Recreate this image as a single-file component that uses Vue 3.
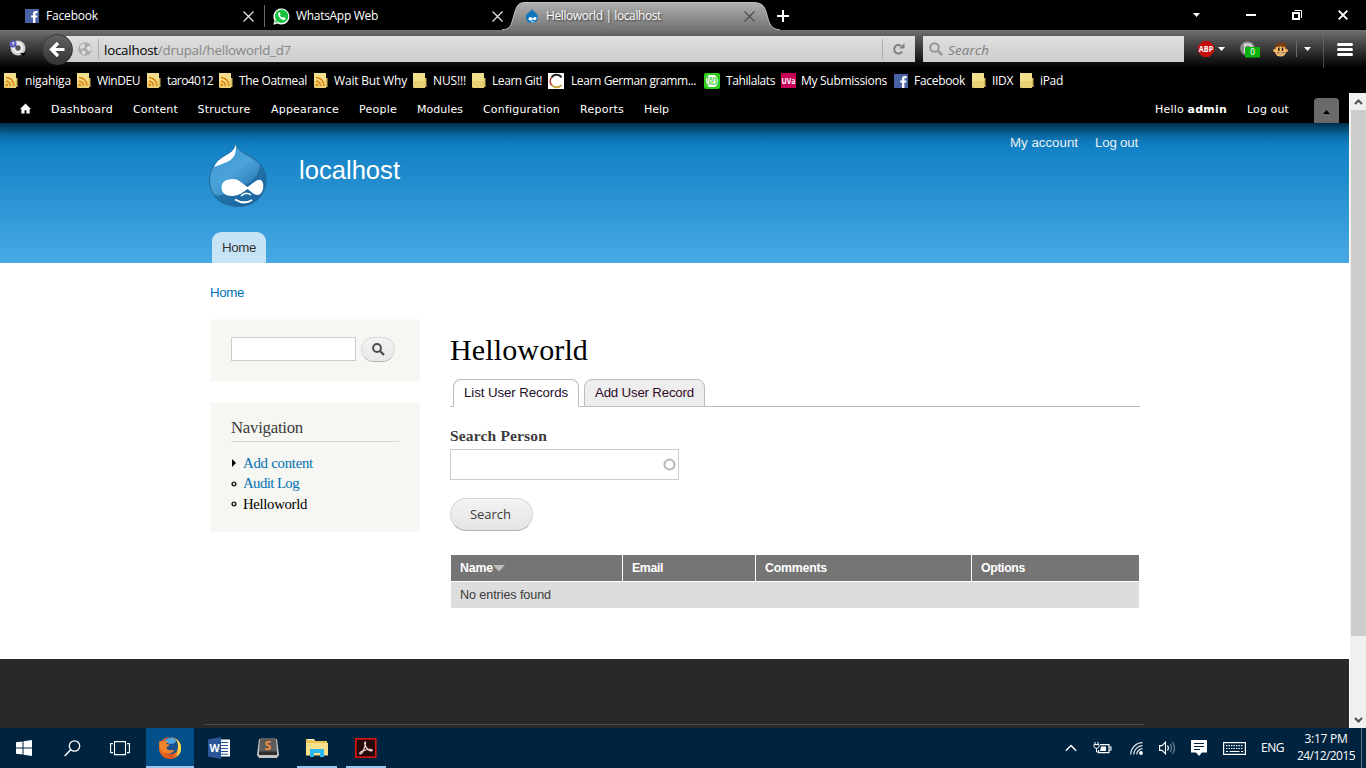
<script setup>
// Spreads letters so a label takes exactly the given width in pixels.
const vFit = {
  mounted(el, { value }) {
    const range = document.createRange()
    range.selectNodeContents(el)
    const natural = range.getBoundingClientRect().width
    const n = el.textContent.length
    if (n > 1) el.style.letterSpacing = (value - natural) / n + 'px'
  },
}

const bookmarks = [
  { icon: 'feed', label: 'nigahiga', w: 46 },
  { icon: 'feed', label: 'WinDEU', w: 43 },
  { icon: 'feed', label: 'taro4012', w: 46 },
  { icon: 'feed', label: 'The Oatmeal', w: 68 },
  { icon: 'feed', label: 'Wait But Why', w: 73 },
  { icon: 'folder', label: 'NUS!!!', w: 33 },
  { icon: 'folder', label: 'Learn Git!', w: 50 },
  { icon: 'german', label: 'Learn German gramm...', w: 125 },
  { icon: 'tahi', label: 'Tahilalats', w: 49 },
  { icon: 'uva', label: 'My Submissions', w: 86 },
  { icon: 'fb', label: 'Facebook', w: 51 },
  { icon: 'folder', label: 'IIDX', w: 21 },
  { icon: 'folder', label: 'iPad', w: 23 },
]

const adminLinks = [
  { label: 'Dashboard', w: 62 },
  { label: 'Content', w: 45 },
  { label: 'Structure', w: 53 },
  { label: 'Appearance', w: 68 },
  { label: 'People', w: 38 },
  { label: 'Modules', w: 46 },
  { label: 'Configuration', w: 77 },
  { label: 'Reports', w: 44 },
  { label: 'Help', w: 25 },
]
</script>

<template>
  <div class="screen">
    <header class="tabstrip">
      <div class="tab first">
        <svg class="fav14" viewBox="0 0 14 14"><rect width="14" height="14" fill="#4862a3"/><path d="M8 14V8.6H6.2V6.4H8V4.8C8 2.9 9 2 10.7 2h1.8v2.2h-1.2c-.7 0-.9.3-.9 1v1.2h2.1l-.3 2.2h-1.8V14z" fill="#fff"/></svg>
        <span v-fit="52" class="tab-title">Facebook</span>
        <svg class="x" viewBox="0 0 11 11"><path d="M.5.5l10 10M10.5.5l-10 10" stroke="#e8e8e8" stroke-width="1.2"/></svg>
      </div>
      <div class="tab second">
        <svg class="wa" viewBox="0 0 17 17"><path d="M.3 16.700l1.200-4.200A8 8 0 1 1 4.600 15.500z" fill="#fff"/><circle cx="8.600" cy="8.300" r="6.700" fill="#19c13f"/><path d="M2 15l.8-3 2 2z" fill="#19c13f"/><path d="M5.400 4.700c.7-.8 1.300-.6 1.600.2l.6 1.300-.8 1.100c.6 1.200 1.500 2 2.700 2.500l1-.9 2 1c.4.300-.1 1.500-.8 1.900-2.700 1.300-7.800-3.600-6.300-7.100z" fill="#fff"/></svg>
        <span v-fit="82" class="tab-title">WhatsApp Web</span>
        <svg class="x" viewBox="0 0 11 11"><path d="M.5.5l10 10M10.500.5l-10 10" stroke="#e8e8e8" stroke-width="1.200"/></svg>
      </div>
      <div class="tab active">
        <svg class="tab-shape" viewBox="0 0 278 28">
          <defs><linearGradient id="tg" x1="0" y1="0" x2="0" y2="1"><stop offset="0" stop-color="#b0b0b0"/><stop offset="1" stop-color="#747474"/></linearGradient></defs>
          <path d="M0 28C8 28 9 24 12 13S17 .5 24 .5H251C261 .5 263 5 265 13S269 28 278 28z" fill="url(#tg)"/>
          <path d="M0 27.800C8 27.500 9 24 12 13S17 .5 24 .5H251C261 .5 263 5 265 13S269 27.500 278 27.800" fill="none" stroke="#c0c0c0" stroke-width="1"/>
        </svg>
        <svg class="fav14 over" viewBox="0 0 14 15"><path d="M6.500 0c1 2 2.500 2.300 4.500 4A6.300 6.300 0 0 1 13.300 9c0 3.500-2.700 6-6.400 6S.5 12.500.5 9c0-2 .8-3.600 2.500-5C4.800 2.700 6 2.200 6.500 0z" fill="#0c76bd"/><path d="M3.200 10.500c0-2.500 3.400-2 4.800-.3 1.400-2 3.700-2.100 3.800-.2 0 2.500-2.200 2.300-3.500 1-2 2.200-5.100 2-5.100-.5z" fill="#fff"/><path d="M6 13.500q2 1 3.500 0" stroke="#fff" fill="none"/></svg>
        <span v-fit="115" class="tab-title over shadow">Helloworld | localhost</span>
        <svg class="x over" viewBox="0 0 11 11"><path d="M.5.5l10 10M10.500.5l-10 10" stroke="#4c4c4c" stroke-width="1.200"/></svg>
      </div>
      <svg class="plus" viewBox="0 0 12 12"><path d="M6 0v12M0 6h12" stroke="#fff" stroke-width="2"/></svg>
      <div class="winctl">
        <svg width="7" height="4" viewBox="0 0 7 4"><path d="M0 0h7L3.500 4z" fill="#fff"/></svg>
        <svg width="10" height="2"><rect width="10" height="2" fill="#fff"/></svg>
        <svg width="10" height="10" viewBox="0 0 10 10"><path d="M1 3h6v6H1z" fill="none" stroke="#fff" stroke-width="2"/><path d="M2.500 .5h7V8" fill="none" stroke="#fff"/></svg>
        <svg width="10" height="10" viewBox="0 0 10 10"><path d="M.7.7l8.600 8.600M9.300.7L.7 9.300" stroke="#fff" stroke-width="1.900"/></svg>
      </div>
    </header>

    <div class="navbar">
      <svg class="eye" viewBox="0 0 17 17"><circle cx="9" cy="8" r="7.500" fill="#cfcfcf"/><circle cx="8.500" cy="7.500" r="5.500" fill="#eee"/><circle cx="9" cy="8" r="2.700" fill="#555"/><circle cx="4" cy="4" r="3.600" fill="#5b59bd"/><path d="M2.800 3.200q1.200-1.400 2.300-.2 0 1-1.100 1.300v1" stroke="#fff" fill="none"/><path d="M11 13h6l-3 3z" fill="#000"/></svg>
      <div class="urlbar">
        <svg class="back" viewBox="0 0 31 31"><defs><linearGradient id="bg1" x1="0" y1="0" x2="0" y2="1"><stop offset="0" stop-color="#626262"/><stop offset="1" stop-color="#333"/></linearGradient></defs><circle cx="15.500" cy="15.500" r="15" fill="url(#bg1)" stroke="#3a3a3a"/><path d="M22.500 15.500H11M16 9l-6.500 6.500L16 22" fill="none" stroke="#fff" stroke-width="3.200"/></svg>
        <svg class="globe" viewBox="0 0 14 14"><circle cx="7" cy="7" r="6.800" fill="#aaa"/><path d="M1.500 4.500L5 1.500 7.500 2 6 4l1.500 1.500L5 6 3.500 8zM9 4.500l3-1 1.500 3-1.500 3-2-1-1.500-1.500zM3.500 9.500L6 8.500l2 1.500-1.500 3-2-1z" fill="#dedede"/></svg>
        <span class="vsep"></span>
        <span v-fit="187" class="url"><b>localhost</b>/drupal/helloworld_d7</span>
        <span class="vsep right"></span>
        <svg class="reload" viewBox="0 0 12 12"><path d="M9.200 8.500A4.300 4.300 0 1 1 8 2.800" fill="none" stroke="#808080" stroke-width="2"/><path d="M11.500 0v5.500H6z" fill="#808080"/></svg>
      </div>
      <div class="searchbar">
        <svg width="14" height="14" viewBox="0 0 14 14"><circle cx="5.500" cy="5.500" r="4.300" fill="none" stroke="#979797" stroke-width="2"/><path d="M8.800 8.800l4.400 4.400" stroke="#979797" stroke-width="2.500"/></svg>
        <span v-fit="41">Search</span>
      </div>
      <div class="addons">
        <svg width="16" height="16" viewBox="0 0 16 16"><path d="M5 0h6l5 5v6l-5 5H5l-5-5V5z" fill="#c70d0c"/><text x=".8" y="11.200" font-family="Open Sans" font-weight="700" font-size="8.500" textLength="14.400" lengthAdjust="spacingAndGlyphs" fill="#fff">ABP</text></svg>
        <svg width="7" height="4" viewBox="0 0 7 4"><path d="M0 0h7L3.500 4z" fill="#fff"/></svg>
        <svg width="20" height="17" viewBox="0 0 20 17"><circle cx="7.500" cy="7.500" r="7.300" fill="#8c8c8c"/><path d="M5 12V3.500h4a2.500 2.500 0 0 1 0 5H6" fill="none" stroke="#ddd" stroke-width="2"/><rect x="5" y="6" width="15" height="10.500" fill="#0bb20b"/><text x="12.500" y="14.300" text-anchor="middle" font-family="DejaVu Sans" font-size="8" fill="#fff">0</text></svg>
        <svg width="16" height="15" viewBox="0 0 16 15"><circle cx="1.800" cy="8.500" r="1.800" fill="#f0b060"/><circle cx="13.200" cy="8.500" r="1.800" fill="#f0b060"/><path d="M2 7V4Q4 0 8 1l5-1-1 2q2 2 1.500 5z" fill="#7a3d12"/><path d="M3 5l4.500-.5L12 5l1 5q-1 4.500-5.500 4.500T2 10z" fill="#f8c070"/><path d="M5.800 5.500v3.500M9.500 5.500v3.500" stroke="#2a1400" stroke-width="1.500"/><path d="M4 10.500q3.500 3.500 7.500 0z" fill="#fff" stroke="#7a3d12" stroke-width=".6"/></svg>
        <span class="asep"></span>
        <svg width="7" height="4" viewBox="0 0 7 4"><path d="M0 0h7L3.500 4z" fill="#fff"/></svg>
        <span class="asep tall"></span>
        <svg width="16" height="13" viewBox="0 0 16 13"><path d="M1.500 1.500h13M1.500 6.500h13M1.500 11.500h13" stroke="#fff" stroke-width="3" stroke-linecap="round"/></svg>
      </div>
    </div>

    <nav class="bookmarks">
      <div v-for="b in bookmarks" :key="b.label" class="bm" :class="b.icon">
        <svg v-if="b.icon === 'feed' || b.icon === 'folder'" width="14" height="15" viewBox="0 0 14 15">
          <path d="M11 5h2.500v9H10z" fill="#d6b95c"/><path d="M0 0h12v14.500H1L0 14z" fill="#f1df8c"/><path d="M0 8h12v7H1L0 14z" fill="#e8d074"/>
          <g v-if="b.icon === 'feed'" fill="none" stroke="#e2830e" stroke-width="1.500"><path d="M2 4.500q7.500.5 8 8.500M2 8q4 .5 4.500 5"/><circle cx="2.800" cy="12" r=".6"/></g>
        </svg>
        <svg v-else-if="b.icon === 'german'" width="16" height="16" viewBox="0 0 16 16"><rect width="16" height="16" fill="#fff"/><path d="M13.500 4.500A6 6 0 0 0 3.500 4.500" fill="none" stroke="#222" stroke-width="2"/><path d="M3.500 4.500a6 6 0 0 0 .5 8" fill="none" stroke="#b22" stroke-width="1.500"/><path d="M4 12a6 6 0 0 0 9.500 0" fill="none" stroke="#c6a23a" stroke-width="2"/></svg>
        <svg v-else-if="b.icon === 'tahi'" width="16" height="16" viewBox="0 0 16 16"><rect width="16" height="16" rx="2" fill="#30ce1c"/><path d="M5 2h6l3 4v5l-3 3H5l-3-3V5z" fill="#fff"/><text x="8" y="7.500" text-anchor="middle" font-family="Open Sans" font-weight="700" font-size="5" fill="#30ce1c">TAHI</text><text x="8" y="12" text-anchor="middle" font-family="Open Sans" font-weight="700" font-size="5" fill="#30ce1c">LALA</text></svg>
        <svg v-else-if="b.icon === 'uva'" width="15" height="15" viewBox="0 0 15 15"><rect width="15" height="15" fill="#c70058"/><text x=".5" y="10.500" font-family="Open Sans" font-weight="700" font-size="8" textLength="14" lengthAdjust="spacingAndGlyphs" fill="#fff">UVa</text></svg>
        <svg v-else width="14" height="14" viewBox="0 0 14 14"><rect width="14" height="14" fill="#4862a3"/><path d="M8 14V8.600H6.200V6.400H8V4.800C8 2.900 9 2 10.700 2h1.800v2.200h-1.200c-.7 0-.9.3-.9 1v1.200h2.100l-.3 2.200h-1.800V14z" fill="#fff"/></svg>
        <span v-fit="b.w">{{ b.label }}</span>
      </div>
    </nav>

    <div class="viewport">
      <div class="page">
        <div class="adminbar">
          <svg class="home-ic" viewBox="0 0 12 11"><path d="M6 0l6 6h-1.500v5H7V7.500H5V11H1.500V6H0z" fill="#fff"/></svg>
          <a v-for="l in adminLinks" :key="l.label"><span v-fit="l.w">{{ l.label }}</span></a>
          <a><span v-fit="72">Hello <strong>admin</strong></span></a>
          <a><span v-fit="42">Log out</span></a>
          <div class="toggle"><svg width="7" height="4" viewBox="0 0 7 4"><path d="M0 4h7L3.500 0z" fill="#000"/></svg></div>
        </div>

        <div class="site-header">
          <div class="inner">
            <div class="brand">
              <svg class="drop" viewBox="0 0 58 66">
                <defs><linearGradient id="dg" x1="0" y1="0" x2=".7" y2="1"><stop offset="0" stop-color="#3a93cd"/><stop offset=".5" stop-color="#4ba3d9"/><stop offset="1" stop-color="#1d6ba5"/></linearGradient></defs>
                <path d="M27 1C28 8 34 10.500 41 14.500 52 21 57 28 57 38 57 54 45 64.500 29 64.500S.5 54 .5 38C.5 27 6 20.500 14 14.500 21 10 26.500 8 27 1z" fill="url(#dg)" stroke="#23699b"/>
                <path d="M51 21q6 8 5.500 17c0 15-12 26-28 26Q12 64 4 53q16 2 28-8Q51 37 51 21z" fill="#19649d" opacity=".7"/>
                <path d="M27 2C27.500 12 25 17 18 20q-7 3-13 5Q8 18 16 14 26 9 27 2z" fill="#fff"/>
                <path d="M12.500 45.500c0-5 4-8.500 11-8.500 7 0 10 5 15 8 5-3 9-8 13-7 5 2 3 15-3 15-4 0-7-4-10-6-4 3-9 7-15 7-7 0-11-3-11-8.500z" fill="#fff"/>
                <path d="M32 54q5-5 10-1" stroke="#fff" stroke-width="1.500" fill="none"/><path d="M26 57.500q9 5.500 17 .5" stroke="#fff" stroke-width="2" fill="none"/>
              </svg>
              <span v-fit="101" class="site-name">localhost</span>
              <div class="user-links"><span v-fit="68">My account</span><span v-fit="43">Log out</span></div>
            </div>
            <div class="main-tab"><span v-fit="34">Home</span></div>
          </div>
        </div>

        <main class="main">
          <div class="crumb"><span v-fit="34">Home</span></div>
          <div class="cols">
            <aside class="side">
              <section class="block searchblock">
                <div class="field"></div>
                <div class="go"><svg width="13" height="13" viewBox="0 0 13 13"><circle cx="5" cy="5" r="3.900" fill="none" stroke="#4d4d4d" stroke-width="2"/><path d="M8 8l4 4" stroke="#4d4d4d" stroke-width="2.300"/></svg></div>
              </section>
              <section class="block navblock">
                <h2><span v-fit="72">Navigation</span></h2>
                <ul>
                  <li><svg width="6" height="8"><path d="M1 0v8l4-4z" fill="#000"/></svg><a v-fit="70">Add content</a></li>
                  <li><svg width="6" height="6" viewBox="0 0 6 6"><circle cx="3" cy="3" r="2" fill="#ccc" stroke="#000" stroke-width="1.200"/></svg><a v-fit="56">Audit Log</a></li>
                  <li><svg width="6" height="6" viewBox="0 0 6 6"><circle cx="3" cy="3" r="2" fill="#ccc" stroke="#000" stroke-width="1.200"/></svg><a v-fit="64" class="current">Helloworld</a></li>
                </ul>
              </section>
            </aside>
            <article class="content">
              <h1><span v-fit="138">Helloworld</span></h1>
              <div class="tabs">
                <div class="t on"><span v-fit="104">List User Records</span></div>
                <div class="t off"><span v-fit="99">Add User Record</span></div>
              </div>
              <label><span v-fit="97">Search Person</span></label>
              <div class="person"><svg width="13" height="13" viewBox="0 0 13 13"><circle cx="6.500" cy="6.500" r="5" fill="none" stroke="#b8b8b8" stroke-width="2.200"/></svg></div>
              <div class="submit"><span v-fit="41">Search</span></div>
              <div class="grid">
                <div class="th"><span v-fit="33">Name</span><svg width="12" height="7"><path d="M0 0h12L6 6.500z" fill="#bebebe"/></svg></div>
                <div class="th"><span v-fit="31">Email</span></div>
                <div class="th"><span v-fit="62">Comments</span></div>
                <div class="th"><span v-fit="44">Options</span></div>
                <div class="td"><span v-fit="91">No entries found</span></div>
              </div>
            </article>
          </div>
        </main>
        <footer class="foot"><div class="rule"></div></footer>
      </div>
      <div class="scroll">
        <svg width="9" height="6" viewBox="0 0 9 6"><path d="M1 5l3.500-3.500L8 5" fill="none" stroke="#505050" stroke-width="2"/></svg>
        <div class="thumb"></div>
        <svg width="9" height="6" viewBox="0 0 9 6"><path d="M1 1l3.500 3.500L8 1" fill="none" stroke="#505050" stroke-width="2"/></svg>
      </div>
    </div>

    <div class="taskbar">
      <div class="app"><svg width="16" height="16" viewBox="0 0 16 16"><path d="M0 2.300l6.500-.9v6.100H0zM7.500 1.200L16 0v7.500H7.500zM0 8.500h6.500v6.100L0 13.700zM7.500 8.500H16V16l-8.500-1.200z" fill="#fff"/></svg></div>
      <div class="app"><svg width="17" height="17" viewBox="0 0 17 17"><circle cx="10.500" cy="6" r="5.200" fill="none" stroke="#fff" stroke-width="1.300"/><path d="M6.700 9.800L.7 16" stroke="#fff" stroke-width="1.500"/></svg></div>
      <div class="app taskview"><svg width="20" height="15" viewBox="0 0 20 15"><path d="M4.500.6h11v13h-11zM3 2.600H.6v9H3M17 2.600h2.400v9H17" fill="none" stroke="#fff" stroke-width="1.100"/></svg></div>
      <div class="app open focus"><svg width="24" height="24" viewBox="0 0 24 24"><defs><linearGradient id="fx" x1="0" y1="0" x2="1" y2="0"><stop offset="0" stop-color="#ea6a1e"/><stop offset=".6" stop-color="#dc4f17"/><stop offset="1" stop-color="#f8b92e"/></linearGradient></defs><circle cx="12" cy="12" r="11" fill="url(#fx)"/><path d="M16 2q7 3 7 10 0 6-4 8.500 2-5.500 1-10.500t-4-8z" fill="#fbd84c"/><path d="M6 5Q9 .8 13.500 1.200 20 3 20 10q0 7-6 8-6 0-7-5-1-5-1-8z" fill="#174f8f"/><path d="M7 4q4-3 8-2.500 3 1.500 3 3.500-1 3-5 3T7 4z" fill="#4fa5d8"/><path d="M1.500 4.500q1.500 1 3 1Q7 4.200 10 5.500q-2 1-1.500 2.500l3 .7q0 1-3 2.500 0 3 4 3 2-.8 3.500 0-1 3-5 3.300Q4 17 2 12q-1.500-4-.5-7.500z" fill="#f0862c"/></svg></div>
      <div class="app"><svg width="22" height="22" viewBox="0 0 22 22"><rect x="11" y="2.500" width="11" height="17" fill="#fff"/><path d="M13 5.500h7M13 8.500h7M13 11.500h7M13 14.500h7M13 17.200h7" stroke="#2b579a" stroke-width="1"/><path d="M0 2.500L13 0v22L0 19.500z" fill="#2b579a"/><text x="6.500" y="15" text-anchor="middle" font-family="Open Sans" font-weight="700" font-size="10.500" fill="#fff">W</text></svg></div>
      <div class="app"><svg width="22" height="20" viewBox="0 0 22 20"><path d="M2 1h18l2 16-2 3H2l-2-3z" fill="#c4c4c4"/><path d="M3 0h16l1 14H2z" fill="#5c5c5c"/><path d="M2 13.500h18V17H2z" fill="#2e2e2e"/><text x="11" y="11.800" text-anchor="middle" font-family="Open Sans" font-weight="700" font-size="12.500" fill="#f0933a">S</text></svg></div>
      <div class="app open narrow"><svg width="22" height="20" viewBox="0 0 22 20"><path d="M0 1h8l1.500 2H21v14H0z" fill="#eec457"/><path d="M0 5h22v12.500H0z" fill="#fbe08a"/><path d="M2 1.500h6" stroke="#fff"/><path d="M4 19v-8h14v8h-4v-4H8v4z" fill="#2ab8f2"/></svg></div>
      <div class="app open narrow"><svg width="22" height="20" viewBox="0 0 22 20"><rect x=".8" y=".8" width="20" height="18.400" fill="#280a0b" stroke="#e5170d" stroke-width="1.500"/><path d="M10.500 4c-2 0 0 5 2 7s5 2.500 4.500 1-5-.5-8.500.5S4 16 5.500 16s5-6 5-12z" fill="none" stroke="#f5dfe0" stroke-width="1.200"/></svg></div>
      <div class="tray">
        <svg width="12" height="8" viewBox="0 0 12 8"><path d="M.8 6.800L6 1.500l5.200 5.300" fill="none" stroke="#fff" stroke-width="1.400"/></svg>
        <svg width="17" height="12" viewBox="0 0 17 12"><path d="M6 2.600h9v8H4.500V8M15.500 5H17v3h-1.500" fill="none" stroke="#fff" stroke-width="1.100"/><path d="M7 4.500h5v4.500H6z" fill="#fff"/><path d="M1 0v2.500M4 0v2.500M0 2.500h5v2Q4 6.500 2.500 6.500T0 4.500zM2.500 6v4H5" fill="none" stroke="#fff"/></svg>
        <svg width="13" height="13" viewBox="0 0 13 13"><path d="M.7 12.500A12 12 0 0 1 12.500.7M3.700 12.500a9 9 0 0 1 8.800-8.800M6.700 12.500a6 6 0 0 1 5.800-5.800" fill="none" stroke="#dde4ea" stroke-width="1.200"/><circle cx="11" cy="11" r="1.900" fill="#fff"/></svg>
        <svg width="17" height="14" viewBox="0 0 17 14"><path d="M.6 4.600h2.600L6.500 1.200v11.600L3.200 9.400H.6z" fill="none" stroke="#fff" stroke-width="1.100"/><path d="M8.500 4.500q1.800 2.500 0 5" fill="none" stroke="#fff" stroke-width="1.200"/><path d="M11 2.700q3 4.300 0 8.600M13.500 1q4 6 0 12" fill="none" stroke="#6f8496" stroke-width="1.200"/></svg>
        <svg width="16" height="16" viewBox="0 0 16 16"><path d="M0 0h16v12.500h-5L8 16l-3-3.500H0z" fill="#fff"/><path d="M3 3.500h10M3 6.500h10M3 9.500h6" stroke="#00233f" stroke-width="1.100"/></svg>
        <svg width="23" height="13" viewBox="0 0 23 13"><rect x=".6" y=".6" width="21.800" height="11.800" fill="none" stroke="#fff" stroke-width="1.200"/><path d="M3 3.700h17.500M3 6.500h17.500" stroke="#fff" stroke-width="1.200" stroke-dasharray="1.400 1.100"/><path d="M3 9.500h2M6.500 9.500h10M18 9.500h2" stroke="#fff" stroke-width="1.200"/></svg>
        <span v-fit="23" class="lang">ENG</span>
        <div class="clock"><span v-fit="43">3:17 PM</span><span v-fit="58">24/12/2015</span></div>
        <span class="peek"></span>
      </div>
    </div>
  </div>
</template>

<style>
html, body { margin: 0; overflow: hidden; background: #000; }
</style>

<style scoped>
.screen { width: 1366px; height: 768px; display: flex; flex-direction: column; background: #000; overflow: hidden; font-family: "Open Sans", "Noto Sans", sans-serif; font-size: 12px; color: #fff; white-space: nowrap; }
.screen * { box-sizing: border-box; }
svg { display: block; flex: none; overflow: visible; }

.tabstrip { height: 30px; flex: none; display: flex; align-items: flex-start; background: #000; }
.tab { display: flex; height: 30px; }
.tab-title { line-height: 16px; margin-top: 8px; }
.x { width: 11px; height: 11px; margin: 11px 0 0 auto; }
.fav14 { width: 14px; height: 14px; margin-top: 9px; }
.first { width: 264px; padding: 0 10.500px 0 25px; gap: 7px; }
.second { width: 238px; height: 22px; margin-top: 5px; border-left: 1px solid #6a6a6a; padding: 0 0 0 8px; gap: 6px; }
.second .wa { width: 17px; height: 17px; margin-top: 3px; }
.second .tab-title { margin-top: 3px; }
.second .x { margin-top: 6px; margin-right: -1px; }
.active { width: 278px; padding: 0 25.500px 0 23px; gap: 7px; position: relative; }
.tab-shape { position: absolute; left: 0; top: 2px; width: 278px; height: 28px; }
.over { position: relative; }
.shadow { text-shadow: 1px 1px 2px #333; }
.plus { width: 12px; height: 12px; margin: 10px 0 0 -3px; }
.winctl { margin-left: auto; width: 173px; height: 29px; display: grid; grid-template-columns: 53px 46px 46px 28px; align-items: center; }

.navbar { height: 38px; flex: none; display: flex; align-items: flex-start; background: linear-gradient(#727272 0, #585858 20%, #000 100%); }
.eye { width: 17px; height: 17px; margin: 10px 0 0 9px; }
.urlbar { height: 26px; width: 849px; margin: 6px 0 0 40px; display: flex; align-items: center; background: linear-gradient(#dfdfdf, #cdcdcd); font-size: 13.300px; color: #868686; }
.url { padding-top: 2px; }
.url b { font-weight: 400; color: #000; }
.back { width: 31px; height: 31px; margin-left: -24px; }
.globe { width: 14px; height: 14px; margin-left: 5px; }
.vsep { width: 1px; height: 20px; background: #adadad; margin: 0 5px 0 6px; }
.vsep.right { margin-left: auto; margin-right: 10px; }
.reload { width: 12px; height: 12px; margin-right: 10px; }
.searchbar { width: 261px; height: 26px; margin: 6px 0 0 8px; padding-left: 6px; display: flex; align-items: center; gap: 5px; background: linear-gradient(#dfdfdf, #cdcdcd); font-size: 13.300px; font-style: italic; color: #7c7c7c; }
.searchbar span { padding-top: 2px; }
.addons { width: 182px; height: 36px; display: grid; grid-template-columns: 20px 22px 33px 23px 8px 19px 14px 1fr; padding-left: 14px; align-items: center; }
.asep { width: 1px; height: 16px; background: #6a6a6a; }
.asep.tall { height: 38px; background: linear-gradient(#707070, #444); }

.bookmarks { height: 25px; flex: none; display: grid; grid-template-columns: 73px 70px 72px 95px 99px 59px 76px 156px 77px 113px 78px 48px 60px; padding-left: 4px; background: #000; }
.bm { display: flex; align-items: center; height: 25px; gap: 6px; }
.bm.feed:first-child, .bm.german { gap: 7px; }
.bm.uva { gap: 5px; }
.bm span { line-height: 16px; margin-top: 1px; }

.viewport { height: 635px; flex: none; display: flex; }
.page { width: 1349px; flex: none; background: #fff; display: flex; flex-direction: column; }
.adminbar { height: 30px; flex: none; margin: 0 -20px; background: #000; box-shadow: 0 3px 20px #000; position: relative; display: grid; grid-template-columns: 31px 82px 64.500px 73.500px 88px 58px 66px 97px 64px 511px 92px 67px 25px; grid-template-rows: 30px; padding-left: 40px; align-items: center; font: 11px "DejaVu Sans", sans-serif; clip-path: inset(0 20px -40px 20px); }
.adminbar a { line-height: 30px; padding-top: 3px; }
.home-ic { width: 11px; height: 11px; }
.toggle { height: 25px; align-self: end; background: #6a6a6a; border-radius: 4px 4px 0 0; display: grid; place-items: center; padding-top: 3px; }

.site-header { height: 140px; flex: none; background: linear-gradient(#0779bf, #48a9e4); font-family: "Liberation Sans", Arial, sans-serif; }
.inner { width: 940px; margin: 0 0 0 205px; padding: 0 7px 0 4px; height: 140px; display: flex; flex-direction: column; justify-content: space-between; }
.brand { display: flex; }
.drop { width: 58px; height: 66px; margin-top: 19px; }
.site-name { font-size: 25.600px; line-height: 30px; margin: 32px 0 0 32px; }
.user-links { margin-left: auto; margin-top: 11px; display: flex; gap: 17px; font-size: 13.300px; line-height: 18px; color: #f2f9fe; }
.main-tab { width: 54px; height: 31px; margin-left: 3px; border-radius: 9px 9px 0 0; background: rgba(255, 255, 255, .7); color: #333; font-size: 13.300px; line-height: 32px; padding-left: 10px; }

.main { height: 396px; flex: none; padding-left: 210px; color: #3b3b3b; font-family: "Liberation Serif", Georgia, serif; }
.crumb { height: 56px; padding-top: 20px; font: 13.300px/20px "Liberation Sans", sans-serif; color: #0071b3; }
.cols { display: flex; gap: 30px; }
.side { width: 210px; display: flex; flex-direction: column; gap: 20px; }
.block { background: #f6f6f2; border: 1px solid #f9f9f9; padding: 0 20px; }
.searchblock { height: 63px; display: flex; gap: 5px; padding-top: 17px; }
.field { width: 125px; height: 24px; border: 1px solid #ccc; background: #fff; }
.go { width: 34px; height: 25px; border: 1px solid #d8d8d8; border-bottom-color: #b4b4b4; border-radius: 13px; background: linear-gradient(#f3f3f3, #e8e8e8); display: grid; place-items: center; }
.navblock { height: 130px; }
.navblock h2 { margin: 14px 0 0; height: 25px; font-size: 16.800px; font-weight: 400; line-height: 21px; border-bottom: 1px solid #d6d6d6; }
.navblock ul { list-style: none; margin: 11px 0 0; padding: 0; font-size: 14.800px; }
.navblock li { display: flex; align-items: center; gap: 6px; height: 20.500px; }
.navblock a { color: #0071b3; }
.navblock a.current { color: #000; }

.content { width: 690px; display: flex; flex-direction: column; }
h1 { margin: 14px 0 0; height: 46px; font-size: 30px; line-height: 34px; font-weight: 400; color: #000; }
.tabs { height: 28px; display: flex; gap: 5px; padding-left: 3px; border-bottom: 1px solid #bbb; font: 13.300px/26px "Liberation Sans", sans-serif; color: #000; }
.t { height: 28px; border: 1px solid #bbb; border-radius: 8px 8px 0 0; padding-left: 10px; color: #1b0b2a; }
.t.on { width: 126px; background: #fff; border-bottom-color: #fff; }
.t.off { width: 121px; background: #ededed; color: #300b28; }
label { height: 42px; padding-top: 19px; font-size: 15.500px; font-weight: 700; line-height: 20px; }
.person { width: 229px; height: 31px; border: 1px solid #ccc; display: flex; align-items: center; justify-content: flex-end; padding-right: 2px; }
.submit { width: 83px; height: 33px; margin-top: 18px; border: 1px solid #d4d4d4; border-bottom-color: #b0b0b0; border-radius: 17px; background: linear-gradient(#f3f3f3, #e4e4e4); font: 13px/31px "Open Sans", sans-serif; text-align: left; padding-left: 19px; }
.grid { width: 688px; margin: 24px 0 0 1px; display: grid; grid-template-columns: 171px 132px 215px 1fr; gap: 1px; font: 12.600px/26px "Liberation Sans", sans-serif; }
.th { height: 26px; background: #757575; color: #fff; font-weight: 700; font-size: 12.300px; padding-left: 9px; display: flex; align-items: center; }
.td { grid-column: 1 / -1; height: 26px; background: #ddd; padding-left: 9px; }

.foot { flex: 1; background: #292929; padding: 65px 0 0 205px; }
.rule { width: 940px; height: 1px; background: #484848; }
.scroll { width: 17px; flex: none; position: relative; background: #f0f0f0; border-left: 1px solid #fff; display: flex; flex-direction: column; align-items: center; padding-top: 6px; }
.thumb { width: 15px; height: 526px; margin: 5px 0 81px; background: #cdcdcd; }

.taskbar { height: 40px; flex: none; display: grid; grid-template-columns: 48px 48px 50px 48px 49px 49px 49px 49px 1fr; background: #00233f; }
.app { display: grid; place-items: center; position: relative; }
.app.taskview { padding-right: 2px; }
.app.focus { background: #034f8a; }
.app.open::after { content: ""; position: absolute; left: 0; right: 0; bottom: 0; height: 2px; background: #97c7f0; }
.app.narrow::after { left: 5px; right: 4px; }
.tray { display: grid; grid-template-columns: 29px 36px 29px 32px 32px 38px 36px 64px 1px; align-items: center; margin-left: 675px; }
.lang { line-height: 16px; }
.clock { display: flex; flex-direction: column; align-items: center; width: 58px; line-height: 17px; padding-bottom: 2px; }
.peek { width: 1px; height: 40px; background: #5f7486; }
</style>
